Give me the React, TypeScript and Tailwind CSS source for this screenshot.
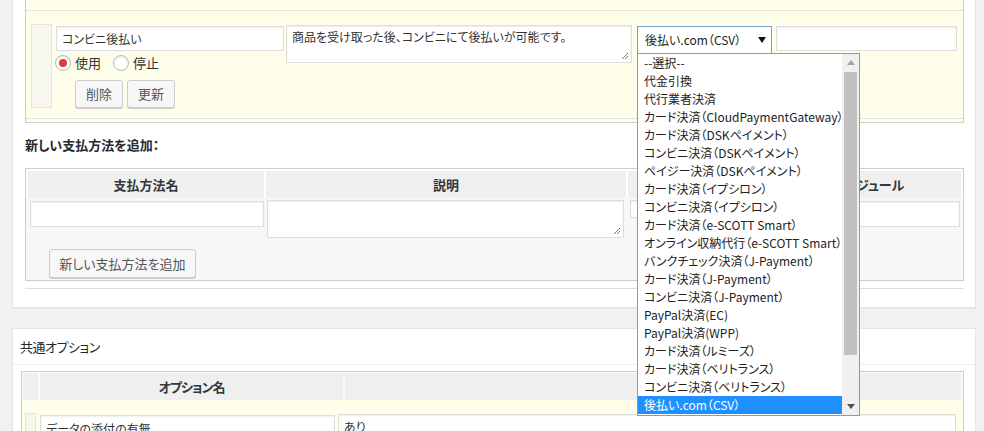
import React from 'react';

const options = [
  '--選択--',
  '代金引換',
  '代行業者決済',
  'カード決済（CloudPaymentGateway）',
  'カード決済（DSKペイメント）',
  'コンビニ決済（DSKペイメント）',
  'ペイジー決済（DSKペイメント）',
  'カード決済（イプシロン）',
  'コンビニ決済（イプシロン）',
  'カード決済（e-SCOTT Smart）',
  'オンライン収納代行（e-SCOTT Smart）',
  'バンクチェック決済（J-Payment）',
  'カード決済（J-Payment）',
  'コンビニ決済（J-Payment）',
  'PayPal決済(EC)',
  'PayPal決済(WPP)',
  'カード決済（ルミーズ）',
  'カード決済（ベリトランス）',
  'コンビニ決済（ベリトランス）',
  '後払い.com（CSV）',
];

const field =
  'border border-[#ddd] bg-white shadow-[inset_0_1px_2px_rgba(0,0,0,0.07)] text-[12px] text-[#333] px-[5px]';

const btn =
  'border border-[#ccc] bg-[#f7f7f7] rounded-[3px] shadow-[0_1px_0_#ccc] text-[13px] text-[#555] whitespace-nowrap flex items-center justify-center';

const th = 'h-[27px] bg-[#efefef] flex items-center justify-center text-[13px] font-bold text-[#32373c] whitespace-nowrap';

const Grip = () => (
  <svg className="absolute right-[2px] bottom-[2px]" width="8" height="8" viewBox="0 0 8 8">
    <path d="M7 1 L1 7 M7 4 L4 7" stroke="#777" strokeWidth="1" />
  </svg>
);

const Radio: React.FC<{ checked?: boolean; label: string }> = ({ checked, label }) => (
  <div className="flex items-center gap-[4px]">
    <span className="w-[16px] h-[16px] rounded-full border border-[#b4b9be] bg-white shadow-[inset_0_1px_2px_rgba(0,0,0,0.1)] flex items-center justify-center">
      {checked && <span className="w-[8px] h-[8px] rounded-full bg-[#dd3d36]" />}
    </span>
    <span className="text-[13px] text-[#333]">{label}</span>
  </div>
);

const DropdownList = () => (
  <div className="absolute left-[637px] top-[53px] w-[223px] h-[363px] border border-[#7a9cd3] bg-white flex">
    <div className="w-[204px]">
      {options.map((o, i) => (
        <div
          key={i}
          className={
            'h-[18px] leading-[18px] pl-[6px] text-[12px] whitespace-nowrap ' +
            (i === options.length - 1 ? 'bg-[#1e90ff] text-white' : 'text-[#222]')
          }
        >
          {o}
        </div>
      ))}
    </div>
    <div className="w-[17px] bg-[#f0f0f0] flex flex-col">
      <div className="h-[17px] flex items-center justify-center">
        <svg width="8" height="5" viewBox="0 0 8 5">
          <path d="M0 5 L4 0 L8 5 Z" fill="#a3a3a3" />
        </svg>
      </div>
      <div className="mt-[1px] mx-[2px] h-[283px] bg-[#c1c1c1]" />
      <div className="flex-1" />
      <div className="h-[18px] flex items-center justify-center">
        <svg width="8" height="5" viewBox="0 0 8 5">
          <path d="M0 0 L8 0 L4 5 Z" fill="#505050" />
        </svg>
      </div>
    </div>
  </div>
);

export default function App() {
  return (
    <div className="relative w-[984px] h-[431px] overflow-hidden bg-[#f1f1f1] pl-[12px] font-['Noto_Sans_CJK_JP',sans-serif] [font-feature-settings:'palt'] text-[#333]">
      {/* payment methods panel */}
      <div className="w-[964px] border-x border-b border-[#e5e5e5] bg-white pl-[12px] pr-[11px] shadow-[0_1px_1px_rgba(0,0,0,0.04)]">
        <div className="border-x border-b border-[#ccc] bg-[#fefeeb]">
          <div className="h-[10px]" />
          <div className="h-[109px] border-y border-dotted border-[#ccc] flex items-start pl-[5px]">
            <div className="mt-[13px] w-[21px] h-[84px] bg-[#f7f7ef] border border-[#e6e6d8]" />
            <div className="ml-[4px] mt-[15px] w-[228px]">
              <div className={field + ' h-[25px] leading-[23px]'}>コンビニ後払い</div>
              <div className="mt-[4px] -ml-[1px] flex items-center gap-[12px] h-[16px]">
                <Radio checked label="使用" />
                <Radio label="停止" />
              </div>
              <div className="mt-[9px] pl-[19px] flex gap-[4px]">
                <button className={btn + ' w-[48px] h-[28px]'}>削除</button>
                <button className={btn + ' w-[48px] h-[28px]'}>更新</button>
              </div>
            </div>
            <div className={field + ' relative ml-[2px] mt-[14px] w-[346px] h-[38px] leading-[20px] pt-[1px]'}>
              商品を受け取った後、コンビニにて後払いが可能です。
              <Grip />
            </div>
            <div className="ml-[5px] mt-[15px] w-[135px] h-[28px] border border-[#7a9cd3] bg-white flex items-center justify-between pl-[7px] pr-[5px] text-[12px] text-[#222]">
              <span>後払い.com（CSV）</span>
              <svg width="8" height="6" viewBox="0 0 8 6">
                <path d="M0 0 L8 0 L4 6 Z" fill="#111" />
              </svg>
            </div>
            <div className={field + ' ml-[4px] mt-[15px] w-[181px] h-[25px]'} />
          </div>
          <div className="h-[3px]" />
        </div>

        <div className="mt-[12px] h-[20px] leading-[20px] text-[13px] font-bold text-[#23282d]">
          新しい支払方法を追加：
        </div>

        <div className="mt-[13px] border border-[#ccc] bg-[#f7f7f7]">
          <div className="bg-white px-[2px] pt-[2px] flex gap-[2px]">
            <div className={th + ' w-[236px]'}>支払方法名</div>
            <div className={th + ' w-[360px]'}>説明</div>
            <div className={th + ' w-[131px]'} />
            <div className={th + ' w-[200px]'}>決済モジュール</div>
          </div>
          <div className="px-[2px] pb-[2px]">
            <div className="h-[40px] flex items-start gap-[2px]">
              <div className="w-[236px]">
                <div className={field + ' ml-[2px] mt-[3px] w-[234px] h-[26px]'} />
              </div>
              <div className="w-[360px]">
                <div className={field + ' relative ml-[1px] mt-[2px] w-[357px] h-[38px]'}>
                  <Grip />
                </div>
              </div>
              <div className="w-[131px]">
                <div className={field + ' ml-[2px] mt-[2px] w-[120px] h-[18px]'} />
              </div>
              <div className="w-[200px]">
                <div className={field + ' mt-[3px] w-[199px] h-[26px]'} />
              </div>
            </div>
            <div className="mt-[11px] pl-[21px]">
              <button className={btn + ' h-[29px] w-[147px]'}>新しい支払方法を追加</button>
            </div>
          </div>
        </div>

        <div className="mt-[7px] border-t border-[#ddd]" />
        <div className="h-[18px]" />
      </div>

      {/* common options panel */}
      <div className="mt-[20px] w-[964px] border border-[#e5e5e5] bg-white shadow-[0_1px_1px_rgba(0,0,0,0.04)]">
        <div className="h-[36px] border-b border-[#eee] pl-[7px] text-[13px] tracking-[-0.5px] leading-[35px] text-[#23282d]">
          共通オプション
        </div>
        <div className="ml-[8px] mt-[6px] w-[943px] border border-[#ccc] bg-[#fefeeb]">
          <div className="bg-[#fbfbf3] px-[1px] pt-[1px] flex gap-[2px]">
            <div className="w-[15px] h-[27px] bg-[#efefef]" />
            <div className={th + ' w-[303px] tracking-[-1px]'}>オプション名</div>
            <div className="w-[616px] h-[27px] bg-[#efefef]" />
          </div>
          <div className="pt-[13px] flex items-start h-[60px]">
            <div className="ml-[3px] w-[11px] h-[40px] bg-[#f7f7ef] border border-[#e6e6d8]" />
            <div className={field + ' ml-[4px] mt-[2px] w-[295px] h-[25px] leading-[25px]'}>データの添付の有無</div>
            <div className={field + ' ml-[3px] mt-[1px] w-[618px] h-[25px] leading-[23px]'}>あり</div>
          </div>
        </div>
      </div>

      <DropdownList />
    </div>
  );
}
